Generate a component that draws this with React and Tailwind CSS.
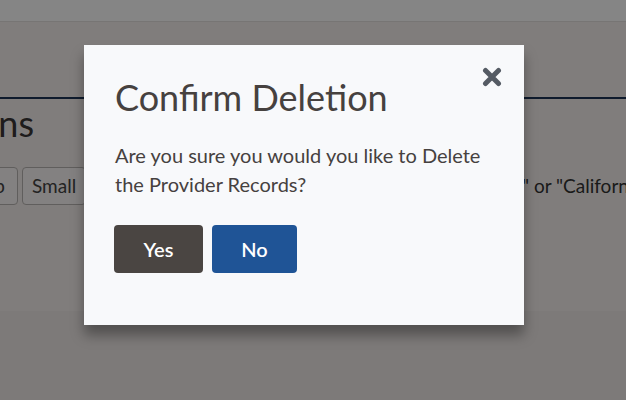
import React, { useState } from 'react';

const font = { fontFamily: '"Source Sans Pro", Lato, "Open Sans", sans-serif' };

const CloseIcon = () => (
  <svg width="20" height="20" viewBox="0 0 20 20" aria-hidden="true">
    <path d="M3.5 3.5 L16.5 16.5 M16.5 3.5 L3.5 16.5" stroke="currentColor" strokeWidth="5" strokeLinecap="round" />
  </svg>
);

export default function App() {
  const [open, setOpen] = useState(true);

  return (
    <div className="relative w-[626px] h-[400px] overflow-hidden bg-[#f6f0ee] text-[#333]" style={font}>
      {/* page behind the modal */}
      <div className="h-[22px] bg-white border-b border-[#e4e0de]"></div>
      <div className="h-[77px] border-b-2 border-[#1e3557]"></div>
      <div className="h-[212px] flex flex-col">
        <div className="w-[34px] flex justify-end mt-[6px]">
          <h2 className="text-[36px] leading-none whitespace-nowrap text-[#3a3636]">Provider Options</h2>
        </div>
        <div className="flex items-center gap-1 mt-[26px]">
          <div className="w-[18px] flex justify-end">
            <button className="h-[38px] px-3 border border-[#b8b4b2] bg-[#fbf8f7] rounded-sm text-[19px] text-[#444] whitespace-nowrap">Lookup</button>
          </div>
          <button className="h-[38px] px-[9px] border border-[#b8b4b2] bg-[#fbf8f7] rounded-sm text-[19px] text-[#444]">Small</button>
          <div className="ml-auto w-[104px] overflow-hidden">
            <span className="text-[19px] text-[#333] whitespace-nowrap">" or "California"</span>
          </div>
        </div>
      </div>
      <div className="h-[90px] bg-[#f0eae8]"></div>

      {open && (
        <div className="absolute inset-0 bg-black/[0.48]">
          <div className="absolute left-[84px] top-[45px] w-[440px] h-[280px] bg-[#f8f9fb] shadow-[0_10px_12px_rgba(0,0,0,0.35)] pl-[31px] pr-[22px] pt-[22px]">
            <div className="flex items-start justify-between">
              <h3 className="text-[36px] leading-none mt-[12px] text-[#46413f]">Confirm Deletion</h3>
              <button onClick={() => setOpen(false)} className="text-[#555b64]">
                <CloseIcon />
              </button>
            </div>
            <p className="mt-[26px] text-[20px] leading-[29px] text-[#46413f]">
              Are you sure you would you like to Delete the Provider Records?
            </p>
            <div className="flex gap-[9px] mt-[26px] -ml-px">
              <button onClick={() => setOpen(false)} className="w-[89px] h-[48px] rounded bg-[#4a4542] text-white text-[20px] font-semibold">Yes</button>
              <button onClick={() => setOpen(false)} className="w-[85px] h-[48px] rounded bg-[#1f5496] text-white text-[20px] font-semibold">No</button>
            </div>
          </div>
        </div>
      )}
    </div>
  );
}
